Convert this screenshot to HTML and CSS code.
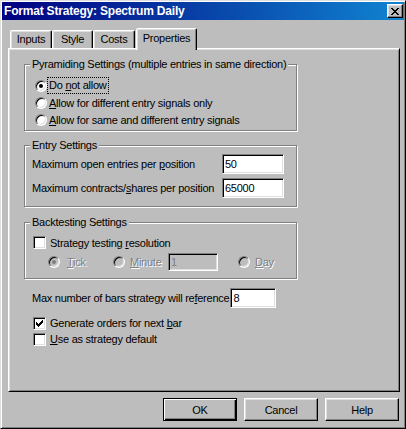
FILE: index.html
```html
<!DOCTYPE html>
<html lang="en">
<head>
    <meta charset="UTF-8">
    <title>Format Strategy: Spectrum Daily</title>
    <link rel="stylesheet" href="styles.css">
</head>
<body>
    <div class="window">
        <div class="titlebar">
            <span class="title">Format Strategy: Spectrum Daily</span>
            <span class="close">
                <svg width="8" height="7" viewBox="0 0 8 7"><path d="M0 0h2v1H0zM6 0h2v1H6zM1 1h2v1H1zM5 1h2v1H5zM2 2h4v1H2zM3 3h2v1H3zM2 4h4v1H2zM1 5h2v1H1zM5 5h2v1H5zM0 6h2v1H0zM6 6h2v1H6z" fill="#000"/></svg>
            </span>
        </div>

        <div class="client">
            <div class="tabs">
                <div class="tab tab-inputs">Inputs</div>
                <div class="tab tab-style">Style</div>
                <div class="tab tab-costs">Costs</div>
                <div class="tab active">Properties</div>
            </div>

            <div class="panel">
                <div class="group pyramid">
                    <div class="legend">Pyramiding Settings (multiple entries in same direction)</div>
                    <div class="option first">
                        <span class="radio on"></span><span class="focus">Do <u>n</u>ot allow</span>
                    </div>
                    <div class="option">
                        <span class="radio"></span><span class="text"><u>A</u>llow for different entry signals only</span>
                    </div>
                    <div class="option">
                        <span class="radio"></span><span class="text"><u>A</u>llow for same and different entry signals</span>
                    </div>
                </div>

                <div class="group entry">
                    <div class="legend">Entry Settings</div>
                    <div class="field first">
                        <span>Maximum open entries per <u>p</u>osition</span>
                        <span class="textbox">50</span>
                    </div>
                    <div class="field">
                        <span>Maximum contracts/<u>s</u>hares per position</span>
                        <span class="textbox">65000</span>
                    </div>
                </div>

                <div class="group backtest">
                    <div class="legend">Backtesting Settings</div>
                    <div class="check-row first">
                        <span class="checkbox"></span><span class="text">Strategy testing <u>r</u>esolution</span>
                    </div>
                    <div class="resolution">
                        <span class="opt opt-tick"><span class="radio on disabled"></span><span class="dim"><u>T</u>ick</span></span>
                        <span class="opt opt-minute"><span class="radio disabled"></span><span class="dim"><u>M</u>inute</span></span>
                        <span class="textbox disabled">1</span>
                        <span class="opt opt-day"><span class="radio disabled"></span><span class="dim"><u>D</u>ay</span></span>
                    </div>
                </div>

                <div class="bars">
                    <span>Max number of bars strategy will re<u>f</u>erence</span>
                    <span class="textbox small">8</span>
                </div>

                <div class="check-row loose first">
                    <span class="checkbox">
                        <svg width="11" height="11" viewBox="0 0 11 11"><path d="M2 4h1v1h1v1h1v-1h1v-1h1v-1h1v-1h1v3h-1v1h-1v1h-1v1h-1v1h-1v-1h-1v-1h-1z" fill="#000"/></svg>
                    </span>
                    <span class="text">Generate orders for next <u>b</u>ar</span>
                </div>
                <div class="check-row loose">
                    <span class="checkbox"></span><span class="text"><u>U</u>se as strategy default</span>
                </div>
            </div>

            <div class="buttons">
                <button class="default">OK</button>
                <button>Cancel</button>
                <button>Help</button>
            </div>
        </div>
    </div>
</body>
</html>
```

FILE: styles.css
```css
* {
    box-sizing: border-box;
}
body {
    margin: 0;
    background: #bdbdbd;
    font-family: "Liberation Sans", Arial, sans-serif;
    font-size: 11px;
    letter-spacing: -0.25px;
    color: #000;
    white-space: nowrap;
}
u {
    text-decoration: underline;
    text-underline-offset: 1px;
}
.window {
    width: 406px;
    height: 429px;
    padding: 1px;
    background: #bdbdbd;
    border: 1px solid;
    border-color: #dfdfdf #000 #000 #dfdfdf;
    box-shadow: inset 1px 1px #fff, inset -1px -1px #808080;
}
.titlebar {
    height: 18px;
    display: flex;
    align-items: center;
    justify-content: space-between;
    padding: 0 1px 0 2px;
    background: linear-gradient(to right, #000080, #1084d0);
}
.title {
    color: #fff;
    font-weight: bold;
    font-size: 12px;
    letter-spacing: -0.2px;
}
.close {
    width: 16px;
    height: 14px;
    display: flex;
    align-items: center;
    justify-content: center;
    background: #bdbdbd;
    border: 1px solid;
    border-color: #fff #000 #000 #fff;
    box-shadow: inset -1px -1px #808080, inset 1px 1px #dfdfdf;
}
.client {
    padding: 8px 0 0 6px;
}

/* tabs */
.tabs {
    display: flex;
    align-items: flex-end;
    height: 20px;
    padding-left: 2px;
}
.tab {
    height: 18px;
    line-height: 17px;
    text-align: center;
    border: 1px solid;
    border-bottom: none;
    border-color: #fff #000 transparent #fff;
    border-radius: 2px 2px 0 0;
    box-shadow: inset -1px 0 #808080, inset 1px 1px #dfdfdf;
}
.tab-inputs { width: 42px; }
.tab-style { width: 41px; }
.tab-costs { width: 42px; }
.tab.active {
    width: 61px;
    height: 22px;
    line-height: 18px;
    margin: 0 0 -2px 1px;
    position: relative;
    z-index: 1;
    background: #bdbdbd;
}

/* main panel */
.panel {
    width: 392px;
    height: 344px;
    padding: 15px 0 0 15px;
    border: 1px solid;
    border-color: #fff #000 #000 #fff;
    box-shadow: inset 1px 1px #dfdfdf, inset -1px -1px #808080;
}
.group {
    width: 273px;
    display: flex;
    flex-direction: column;
    padding: 0 12px 0 7px;
    border: 1px solid #808080;
    box-shadow: inset 1px 1px #fff, 1px 1px #fff;
}
.legend {
    align-self: flex-start;
    height: 13px;
    line-height: 13px;
    margin: -7px 0 0 -2px;
    padding: 0 2px;
    background: #bdbdbd;
}
.pyramid {
    height: 67px;
}
.entry {
    height: 62px;
    margin-top: 14px;
}
.backtest {
    height: 57px;
    margin-top: 15px;
}

/* radios and checks */
.option {
    height: 17px;
    display: flex;
    align-items: center;
    padding-left: 3px;
}
.option.first {
    margin-top: 6px;
}
.radio {
    flex: none;
    position: relative;
    width: 12px;
    height: 12px;
    border-radius: 50%;
    background: #fff;
    border: 1px solid;
    border-color: #808080 #fff #fff #808080;
    box-shadow: inset 1px 1px #000, inset -1px -1px #dfdfdf;
}
.radio.on::after {
    content: "";
    position: absolute;
    left: 3px;
    top: 3px;
    width: 4px;
    height: 4px;
    border-radius: 50%;
    background: #000;
}
.radio.disabled {
    background: #bdbdbd;
}
.radio.disabled::after {
    background: #808080;
}
.option .text {
    margin-left: 2px;
}
.focus {
    margin-left: 1px;
    padding: 1px 1px;
    line-height: 13px;
    outline: 1px dotted #000;
}
.checkbox {
    flex: none;
    width: 13px;
    height: 13px;
    background: #fff;
    border: 1px solid;
    border-color: #808080 #fff #fff #808080;
    box-shadow: inset 1px 1px #000, inset -1px -1px #dfdfdf;
}
.checkbox svg {
    display: block;
}
.check-row {
    height: 17px;
    display: flex;
    align-items: center;
    padding-left: 1px;
}
.check-row.first {
    margin-top: 5px;
}
.check-row .text {
    margin-left: 4px;
}
.check-row.loose {
    height: 16px;
    padding-left: 9px;
}
.check-row.loose.first {
    margin-top: 7px;
}

/* text fields */
.field {
    height: 20px;
    display: flex;
    align-items: center;
    justify-content: space-between;
    margin-top: 4px;
}
.field.first {
    margin-top: 2px;
}
.textbox {
    flex: none;
    width: 62px;
    height: 20px;
    line-height: 18px;
    padding-left: 2px;
    background: #fff;
    border: 1px solid;
    border-color: #808080 #fff #fff #808080;
    box-shadow: inset 1px 1px #000, inset -1px -1px #dfdfdf;
}
.textbox.small {
    width: 46px;
    margin-left: 1px;
}
.textbox.disabled {
    width: 50px;
    height: 18px;
    line-height: 16px;
    background: #bdbdbd;
    color: #808080;
}

/* resolution row */
.resolution {
    height: 20px;
    margin-top: 1px;
    display: flex;
    align-items: center;
    padding-left: 16px;
}
.opt {
    display: flex;
    align-items: center;
}
.opt-tick { width: 65px; }
.opt-minute { width: 55px; }
.opt-day { margin-left: 20px; }
.dim {
    color: #808080;
    text-shadow: 1px 1px #fff;
    margin-left: 5px;
}
.opt-tick .dim {
    margin-left: 7px;
}

.bars {
    height: 20px;
    margin-top: 9px;
    padding-left: 8px;
    display: flex;
    align-items: center;
}

/* dialog buttons */
.buttons {
    display: flex;
    justify-content: flex-end;
    gap: 7px;
    margin-top: 6px;
    padding-right: 5px;
}
button {
    width: 74px;
    height: 23px;
    padding: 0;
    font-family: inherit;
    font-size: 11px;
    letter-spacing: -0.25px;
    color: #000;
    background: #bdbdbd;
    border: 1px solid;
    border-color: #fff #000 #000 #fff;
    box-shadow: inset -1px -1px #808080, inset 1px 1px #dfdfdf;
}
button.default {
    border-color: #000;
    box-shadow: inset 1px 1px #fff, inset -1px -1px #000, inset -2px -2px #808080;
}
```
